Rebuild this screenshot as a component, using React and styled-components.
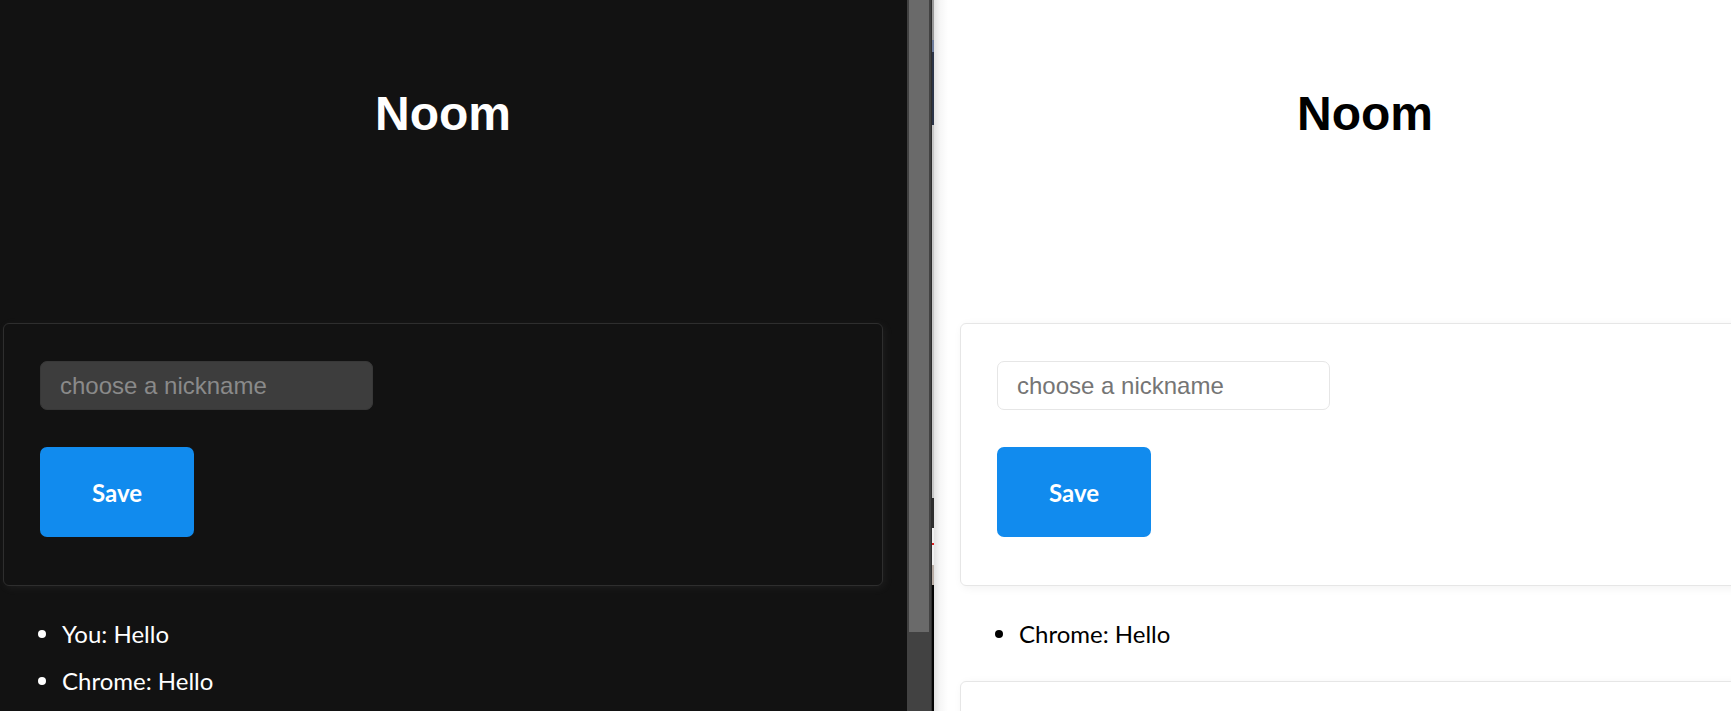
import React from "react";
import styled, { createGlobalStyle } from "styled-components";

const GlobalStyle = createGlobalStyle`
  html, body {
    margin: 0;
    padding: 0;
    overflow: hidden;
    background: #121212;
  }
`;

const Desktop = styled.div`
  display: flex;
  width: 1731px;
  height: 711px;
  overflow: hidden;
`;

const Window = styled.div`
  flex: ${(p) => (p.$width ? `0 0 ${p.$width}px` : "1 1 auto")};
  min-width: 0;
  height: 711px;
  overflow: hidden;
  padding-left: ${(p) => p.$pad}px;
  box-sizing: border-box;
  background: ${(p) =>
    p.$dark ? "#121212" : "linear-gradient(to right, #e2e2e2 0px, #f6f6f6 6px, #ffffff 14px)"};
  color: ${(p) => (p.$dark ? "#ffffff" : "#000000")};
  font-family: Lato, "Open Sans", sans-serif;
`;

const Column = styled.div`
  width: ${(p) => p.$width}px;
`;

const Header = styled.header`
  padding: 78px 0 173px;
`;

const Title = styled.h1`
  margin: 0;
  font-family: "Liberation Sans", Arial, sans-serif;
  font-size: 48px;
  font-weight: 700;
  line-height: 72px;
  text-align: center;
`;

const Card = styled.form`
  display: flex;
  flex-direction: column;
  align-items: flex-start;
  margin: 0;
  min-height: 176px;
  padding: 37px 36px 48px;
  border: 1px solid ${(p) => (p.$dark ? "#2e2e2e" : "#e6e6e6")};
  border-radius: 6px;
  box-shadow: 2px 2px 10px ${(p) => (p.$dark ? "rgba(187,187,187,0.07)" : "#f2f2f2")};
`;

const Input = styled.input`
  width: 333px;
  height: 49px;
  box-sizing: border-box;
  margin: 0 0 37px;
  padding: 0 19px;
  border: 1px solid ${(p) => (p.$dark ? "#383838" : "#e6e6e6")};
  border-radius: 7px;
  background: ${(p) => (p.$dark ? "#3d3d3d" : "#ffffff")};
  color: inherit;
  font-family: "Liberation Sans", Arial, sans-serif;
  font-size: 24px;
  outline: none;

  &::placeholder {
    color: ${(p) => (p.$dark ? "#8a8a8a" : "#757575")};
  }
`;

const Button = styled.button`
  width: 154px;
  height: 90px;
  border: none;
  border-radius: 7px;
  background: #118bee;
  color: #ffffff;
  font-family: Lato, "Open Sans", sans-serif;
  font-size: 24px;
  font-weight: 700;
  cursor: pointer;
`;

const Messages = styled.ul`
  margin: 24px 0 24px;
  padding: 0;
  list-style: none;
`;

const Message = styled.li`
  display: flex;
  align-items: center;
  margin-left: 35px;
  padding: 5px 0;
  font-size: 24px;
  line-height: 37px;

  &::before {
    content: "";
    width: 8px;
    height: 8px;
    margin-right: 16px;
    border-radius: 50%;
    background: currentColor;
  }
`;

const Scrollbar = styled.div`
  flex: 0 0 25px;
  display: flex;
  align-items: flex-start;
  padding: 0 2px;
  box-sizing: border-box;
  background: #424242;
  border-right: 1px solid #2e2e2e;
`;

const Thumb = styled.div`
  flex: 1;
  height: 632px;
  background: #6a6a6a;
`;

const BackWindow = styled.div`
  flex: 0 0 2px;
  background: linear-gradient(
    to bottom,
    #9a9a9a 0px,
    #9a9a9a 40px,
    #6e7d9c 40px,
    #6e7d9c 52px,
    #2b3448 52px,
    #2b3448 125px,
    #c9c9c9 125px,
    #c9c9c9 498px,
    #2e2e2e 498px,
    #2e2e2e 528px,
    #f0f0f0 528px,
    #f0f0f0 543px,
    #d22 543px,
    #d22 545px,
    #f0f0f0 545px,
    #f0f0f0 565px,
    #b9aea6 565px,
    #b9aea6 585px,
    #050505 585px
  );
`;

function Room({ dark, messages, width }) {
  return (
    <Column $width={width}>
      <Header>
        <Title>Noom</Title>
      </Header>
      <Card $dark={dark} onSubmit={(e) => e.preventDefault()}>
        <Input $dark={dark} type="text" placeholder="choose a nickname" />
        <Button>Save</Button>
      </Card>
      <Messages>
        {messages.map((m, i) => (
          <Message key={i}>{m}</Message>
        ))}
      </Messages>
      {/* message composer: only its top edge is on screen */}
      <Card $dark={dark} onSubmit={(e) => e.preventDefault()} />
    </Column>
  );
}

export default function App() {
  return (
    <>
      <GlobalStyle />
      <Desktop>
        <Window $dark $width={907} $pad={3}>
          <Room dark width={880} messages={["You: Hello", "Chrome: Hello"]} />
        </Window>
        <Scrollbar>
          <Thumb />
        </Scrollbar>
        <BackWindow />
        <Window $pad={26}>
          <Room width={810} messages={["Chrome: Hello"]} />
        </Window>
      </Desktop>
    </>
  );
}
